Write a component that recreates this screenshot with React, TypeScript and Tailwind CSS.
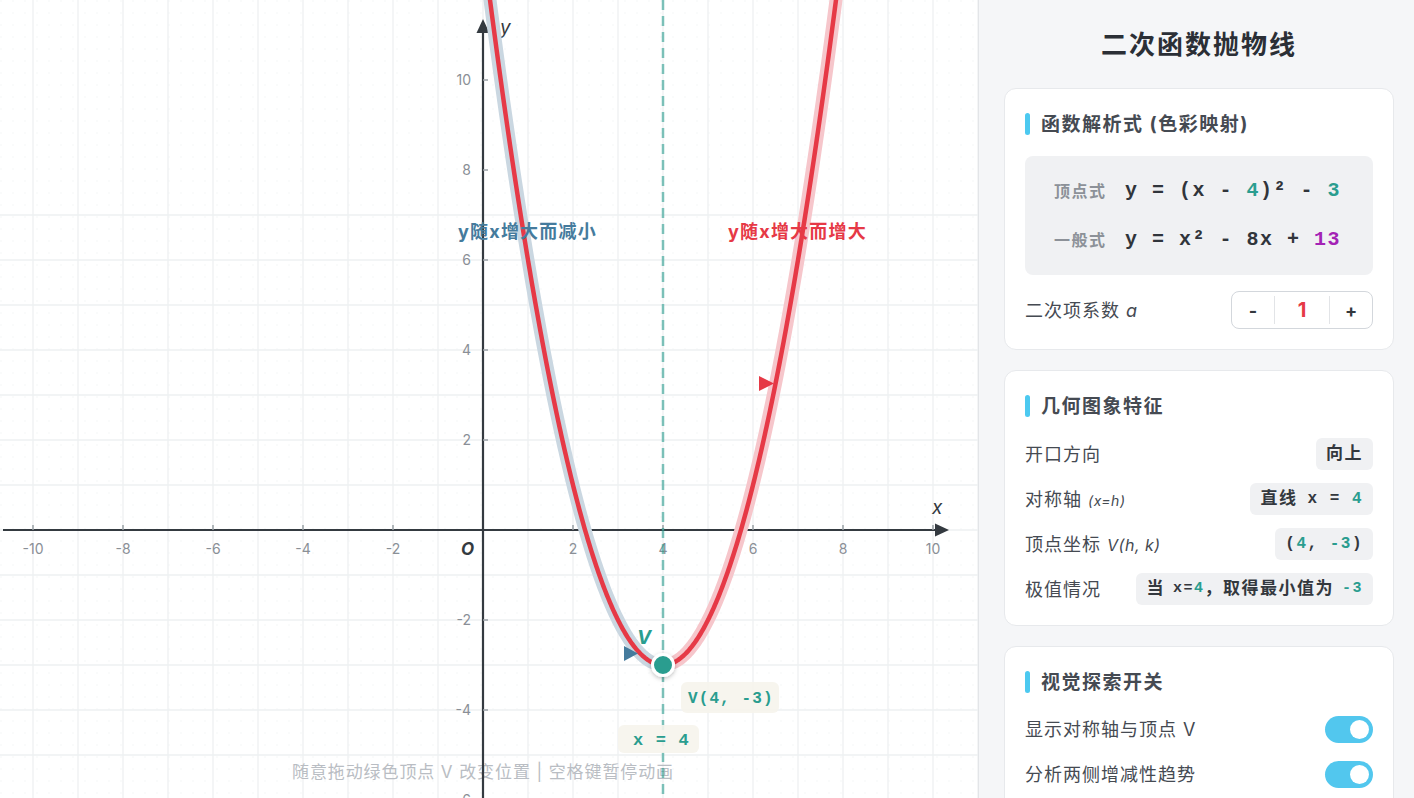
import React from "react";

const OX = 483;
const OY = 530;
const U = 45;
const sx = (x: number) => OX + U * x;
const sy = (y: number) => OY - U * y;
const f = (x: number) => (x - 4) * (x - 4) - 3;

function branch(a: number, b: number) {
  const pts: string[] = [];
  const n = 200;
  for (let i = 0; i <= n; i++) {
    const x = a + ((b - a) * i) / n;
    pts.push(`${sx(x).toFixed(2)},${sy(f(x)).toFixed(2)}`);
  }
  return "M" + pts.join(" L");
}

const SANS = "Inter, 'Noto Sans CJK SC', sans-serif";
const MONO = "'Liberation Mono', 'Noto Sans CJK SC', monospace";

function Graph() {
  const vLines: number[] = [];
  for (let k = -11; k <= 11; k++) {
    const x = OX + U * k;
    if (x >= 0 && x <= 978) vLines.push(x);
  }
  const hLines: number[] = [];
  for (let k = -7; k <= 12; k++) {
    const y = OY + U * k;
    if (y >= 0 && y <= 798) hLines.push(y);
  }
  const xt = [-10, -8, -6, -4, -2, 2, 4, 6, 8, 10];
  const yt = [-6, -4, -2, 2, 4, 6, 8, 10];
  const left = branch(0, 4);
  const right = branch(4, 8);
  const vx = sx(4);
  const vy = sy(-3);
  return (
    <svg width="978" height="798" viewBox="0 0 978 798" className="block">
      <defs>
        <pattern id="dots" width="12" height="12" patternUnits="userSpaceOnUse">
          <circle cx="1" cy="1" r="0.8" fill="#f4f5f6" />
        </pattern>
        <filter id="sh" x="-50%" y="-50%" width="200%" height="200%">
          <feDropShadow dx="0" dy="1.5" stdDeviation="2" floodColor="#000" floodOpacity="0.25" />
        </filter>
      </defs>
      <rect x="0" y="0" width="978" height="798" fill="#ffffff" />
      <rect x="0" y="0" width="978" height="798" fill="url(#dots)" />
      {vLines.map((x) => (
        <line key={"v" + x} x1={x} y1={0} x2={x} y2={798} stroke="#eef0f2" strokeWidth="1.3" />
      ))}
      {hLines.map((y) => (
        <line key={"h" + y} x1={0} y1={y} x2={978} y2={y} stroke="#eef0f2" strokeWidth="1.3" />
      ))}

      <text
        x={483}
        y={778}
        textAnchor="middle"
        fontFamily={SANS}
        fontSize="17"
        letterSpacing="0.9"
        fill="#b9bdc3"
      >
        随意拖动绿色顶点 V 改变位置 | 空格键暂停动画
      </text>

      {/* axes */}
      <line x1={3} y1={OY} x2={938} y2={OY} stroke="#343a40" strokeWidth="2.2" />
      <polygon points={`949,${OY} 935,${OY - 6.5} 935,${OY + 6.5}`} fill="#343a40" />
      <line x1={OX} y1={798} x2={OX} y2={30} stroke="#343a40" strokeWidth="2.2" />
      <polygon points={`${OX},19 ${OX - 6.5},33 ${OX + 6.5},33`} fill="#343a40" />

      {xt.map((v) => (
        <g key={"xt" + v}>
          <line x1={sx(v)} y1={OY - 5} x2={sx(v)} y2={OY} stroke="#9aa0a6" strokeWidth="1.5" />
          <text x={sx(v)} y={554} textAnchor="middle" fontFamily={SANS} fontSize="14" fill="#8a8f96">
            {v < 0 ? "-" + Math.abs(v) : v}
          </text>
        </g>
      ))}
      {yt.map((v) => (
        <g key={"yt" + v}>
          <line x1={OX} y1={sy(v)} x2={OX + 5} y2={sy(v)} stroke="#9aa0a6" strokeWidth="1.5" />
          <text x={471} y={sy(v) + 5} textAnchor="end" fontFamily={SANS} fontSize="14" fill="#8a8f96">
            {v < 0 ? "-" + Math.abs(v) : v}
          </text>
        </g>
      ))}
      <text x={461} y={555} fontFamily={SANS} fontSize="17" fontWeight="700" fontStyle="italic" fill="#343a40">
        O
      </text>
      <text x={500} y={34} fontFamily={SANS} fontSize="19" fontStyle="italic" fill="#343a40">
        y
      </text>
      <text x={932} y={514} fontFamily={SANS} fontSize="19" fontStyle="italic" fill="#343a40">
        x
      </text>

      {/* symmetry axis */}
      <line x1={vx} y1={0} x2={vx} y2={798} stroke="#2a9d8f" strokeOpacity="0.6" strokeWidth="2.5" strokeDasharray="10 6" />

      {/* halos */}
      <path d={left} fill="none" stroke="#cad7e1" strokeWidth="13" strokeLinecap="round" strokeLinejoin="round" />
      <path d={right} fill="none" stroke="#f6c6cb" strokeWidth="13" strokeLinecap="round" strokeLinejoin="round" />
      {/* curve */}
      <path d={left + " " + right.replace("M", "L")} fill="none" stroke="#e63946" strokeWidth="4.5" strokeLinecap="round" strokeLinejoin="round" />

      {/* trend labels */}
      <text x={458} y={238} fontFamily={SANS} fontSize="18" fontWeight="700" letterSpacing="1.2" fill="#457b9d">
        y随x增大而减小
      </text>
      <text x={728} y={238} fontFamily={SANS} fontSize="18" fontWeight="700" letterSpacing="1.2" fill="#e63946">
        y随x增大而增大
      </text>

      {/* moving markers */}
      <polygon points="624,646 624,661 638,653.5" fill="#457b9d" />
      <polygon points="759,376 759,391 774,383.5" fill="#e63946" />

      {/* vertex */}
      <text x={637} y={644} fontFamily={SANS} fontSize="19" fontWeight="700" fontStyle="italic" fill="#2a9d8f">
        V
      </text>
      <circle cx={vx} cy={vy} r={10.5} fill="#2a9d8f" stroke="#ffffff" strokeWidth="3" filter="url(#sh)" />

      <rect x={681} y={682} width={98} height={31} rx={6} fill="#f6f4ec" fillOpacity="0.9" />
      <text x={688} y={703} fontFamily={MONO} fontSize="16" fontWeight="700" letterSpacing="1.1" fill="#2a9d8f">
        V(4, -3)
      </text>
      <rect x={618} y={725} width={81} height={28} rx={6} fill="#f6f4ec" fillOpacity="0.9" />
      <text x={633} y={745} fontFamily={MONO} fontSize="17" fontWeight="700" letterSpacing="1.2" fill="#2a9d8f">
        x = 4
      </text>
    </svg>
  );
}

function CardHeader({ title }: { title: string }) {
  return (
    <div className="flex h-[22px] items-center gap-[11px]">
      <div className="h-[22px] w-[5px] rounded-full bg-[#4cc9f0]" />
      <div className="text-[19px] font-bold leading-none tracking-[1.5px] text-[#454a52]">{title}</div>
    </div>
  );
}

function Card({ children }: { children: React.ReactNode }) {
  return (
    <div className="rounded-[12px] border border-[#e7e9ec] bg-white px-[20px] pb-[20px] pt-[24px]">{children}</div>
  );
}

const mono = "font-['Liberation_Mono','Noto_Sans_CJK_SC',monospace]";

function Badge({ children, className = "" }: { children: React.ReactNode; className?: string }) {
  return (
    <div
      className={
        "flex h-[32px] items-center whitespace-nowrap rounded-[6px] bg-[#f0f1f3] px-[10px] text-[17px] font-bold tracking-[1.5px] text-[#33383e] " +
        className
      }
    >
      {children}
    </div>
  );
}

function Toggle() {
  return (
    <div className="flex h-[27px] w-[48px] items-center justify-end rounded-full bg-[#52c7ee] pr-[4px]">
      <div className="h-[19px] w-[19px] rounded-full bg-white" />
    </div>
  );
}

function Panel() {
  const row = "flex h-[32px] items-center justify-between";
  const label = "text-[18px] tracking-[1px] text-[#454a52]";
  return (
    <div className="flex h-full w-[436px] shrink-0 flex-col overflow-hidden border-l border-[#e3e5e8] bg-[#f5f6f8] pl-[25px] pr-[20px] pt-[25px]">
      <div className="flex h-[40px] items-center justify-center text-[26px] font-bold tracking-[2px] text-[#2b2f36]">
        二次函数抛物线
      </div>
      <div className="mt-[24px] flex flex-col gap-[20px]">
        <Card>
          <CardHeader title="函数解析式 (色彩映射)" />
          <div className="mt-[21px] flex flex-col gap-[19px] rounded-[8px] bg-[#f0f1f3] px-[29px] py-[20px]">
            <div className="flex h-[30px] items-center">
              <div className="w-[71px] text-[16px] font-bold tracking-[1.5px] text-[#8c9198]">顶点式</div>
              <div className={mono + " whitespace-pre text-[20px] font-bold tracking-[1.5px] text-[#30353b]"}>
                {"y = (x - "}
                <span className="text-[#2a9d8f]">4</span>
                {")² - "}
                <span className="text-[#2a9d8f]">3</span>
              </div>
            </div>
            <div className="flex h-[30px] items-center">
              <div className="w-[71px] text-[16px] font-bold tracking-[1.5px] text-[#8c9198]">一般式</div>
              <div className={mono + " whitespace-pre text-[20px] font-bold tracking-[1.5px] text-[#30353b]"}>
                {"y = x² - 8x + "}
                <span className="text-[#a323b5]">13</span>
              </div>
            </div>
          </div>
          <div className="mt-[16px] flex h-[38px] items-center justify-between">
            <div className={label}>
              二次项系数 <span className="italic">a</span>
            </div>
            <div className="flex h-[38px] items-center rounded-[8px] border border-[#d3d7dc]">
              <div className="w-[42px] text-center text-[18px] font-bold text-[#33383e]">-</div>
              <div className="h-[28px] w-px bg-[#e2e4e7]" />
              <div className="w-[54px] text-center text-[20px] font-bold text-[#e63946]">1</div>
              <div className="h-[28px] w-px bg-[#e2e4e7]" />
              <div className="w-[42px] text-center text-[18px] font-bold text-[#33383e]">+</div>
            </div>
          </div>
        </Card>

        <Card>
          <CardHeader title="几何图象特征" />
          <div className="mt-[21px] flex flex-col gap-[13px]">
            <div className={row}>
              <div className={label}>开口方向</div>
              <Badge>向上</Badge>
            </div>
            <div className={row}>
              <div className={label}>
                对称轴 <span className="text-[14px] italic tracking-[0.5px]">(x=h)</span>
              </div>
              <Badge>
                <span>直线</span>
                <span className={mono + " ml-[10px] whitespace-pre text-[16px]"}>
                  {"x = "}
                  <span className="text-[#2a9d8f]">4</span>
                </span>
              </Badge>
            </div>
            <div className={row}>
              <div className={label}>
                顶点坐标 <span className="text-[16px] italic tracking-[0.5px]">V(h, k)</span>
              </div>
              <Badge>
                <span className={mono + " whitespace-pre text-[16px]"}>
                  {"("}
                  <span className="text-[#2a9d8f]">4</span>
                  {", "}
                  <span className="text-[#2a9d8f]">-3</span>
                  {")"}
                </span>
              </Badge>
            </div>
            <div className={row}>
              <div className={label}>极值情况</div>
              <Badge className="text-[16px]">
                <span>当</span>
                <span className={mono + " ml-[8px] whitespace-pre text-[15px]"}>
                  {"x="}
                  <span className="text-[#2a9d8f]">4</span>
                </span>
                <span>，取得最小值为</span>
                <span className={mono + " ml-[8px] whitespace-pre text-[15px] text-[#2a9d8f]"}>-3</span>
              </Badge>
            </div>
          </div>
        </Card>

        <Card>
          <CardHeader title="视觉探索开关" />
          <div className="mt-[21px] flex flex-col gap-[15px]">
            <div className="flex h-[30px] items-center justify-between">
              <div className={label}>显示对称轴与顶点 V</div>
              <Toggle />
            </div>
            <div className="flex h-[30px] items-center justify-between">
              <div className={label}>分析两侧增减性趋势</div>
              <Toggle />
            </div>
          </div>
        </Card>
      </div>
    </div>
  );
}

export default function App() {
  return (
    <div className="flex h-[798px] w-full overflow-hidden font-['Inter','Noto_Sans_CJK_SC',sans-serif]">
      <div className="relative h-full flex-1 overflow-hidden bg-white">
        <Graph />
      </div>
      <Panel />
    </div>
  );
}
